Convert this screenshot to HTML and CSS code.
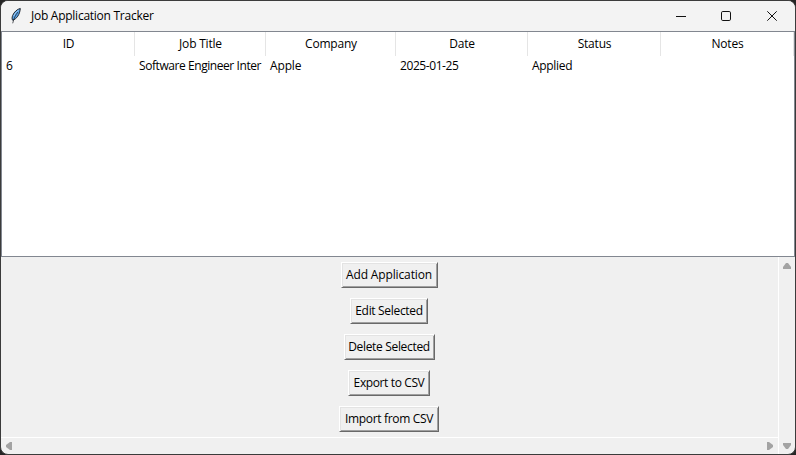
FILE: index.html
```html
<!DOCTYPE html>
<html lang="en">
<head>
<meta charset="utf-8">
<title>Job Application Tracker</title>
<link rel="stylesheet" href="styles.css">
</head>
<body>
<div class="window">
  <header class="titlebar">
    <svg class="feather" width="12" height="18" viewBox="0 0 12 18">
      <path d="M10.3 1.5C7.5 2 4 5 2.7 8.4C1.9 10.4 1.9 12 2.6 13.2C6.5 12.2 9.9 7.5 10.3 1.5Z" fill="#5ba3e6" stroke="#10151c" stroke-width=".9"/>
      <path d="M8 5C5.5 8 4 11 2.7 16.3" fill="none" stroke="#15191f" stroke-width=".7"/>
      <path d="M8.5 3.2C6.3 4.7 4.7 6.7 3.9 8.9" fill="none" stroke="#a9d2f5" stroke-width=".9"/>
    </svg>
    <h1 class="title">Job Application Tracker</h1>
    <svg class="controls" width="104" height="14" viewBox="0 0 104 14" fill="none" stroke="#111">
      <path d="M1 7.5H11"/>
      <rect x="46.5" y="2.5" width="9" height="9" rx="1.3"/>
      <path d="M92.3 2.3L101.7 11.7M101.7 2.3L92.3 11.7"/>
    </svg>
  </header>
  <main class="table">
    <div class="row head">
      <span>ID</span><span>Job Title</span><span>Company</span><span>Date</span><span>Status</span><span>Notes</span>
    </div>
    <div class="row">
      <span>6</span><span class="long">Software Engineer Inter</span><span>Apple</span><span class="date">2025-01-25</span><span>Applied</span><span></span>
    </div>
  </main>
  <section class="lower">
    <div class="actions">
      <button class="btn add">Add Application</button>
      <button class="btn edit">Edit Selected</button>
      <button class="btn delete">Delete Selected</button>
      <button class="btn export">Export to CSV</button>
      <button class="btn import">Import from CSV</button>
    </div>
    <div class="vbar">
      <svg width="8" height="6" viewBox="0 0 8 6"><path d="M3 0H5L8 4V6H0V4Z"/></svg>
      <svg width="8" height="6" viewBox="0 0 8 6"><path d="M0 0H8V2L5 6H3L0 2Z"/></svg>
    </div>
    <div class="hbar">
      <svg width="6" height="8" viewBox="0 0 6 8"><path d="M6 0V8H4L0 5V3L4 0Z"/></svg>
      <svg width="6" height="8" viewBox="0 0 6 8"><path d="M0 0V8H2L6 5V3L2 0Z"/></svg>
    </div>
  </section>
</div>
</body>
</html>
```
FILE: styles.css
```css
* { box-sizing: border-box; }
body {
  margin: 0;
  height: 455px;
  overflow: hidden;
  background: #252525;
  color: #000;
  font: 12px/16px "Open Sans", "Noto Sans", sans-serif;
  letter-spacing: -0.32px;
}
.window {
  display: flex;
  flex-direction: column;
  width: 796px;
  height: 455px;
  border: 1px solid #3b3b3b;
  border-radius: 8px;
  overflow: hidden;
  background: #f0f0f0;
}
.titlebar {
  display: flex;
  align-items: center;
  height: 30px;
  padding: 0 16px 0 9px;
  background: #f3f3f3;
}
.feather { margin-top: -1px; }
.title {
  flex: 1;
  margin: 0 0 0 9px;
  font-size: 12px;
  font-weight: 400;
  letter-spacing: -0.26px;
  white-space: nowrap;
}
.table {
  height: 226px;
  border: 1px solid #828790;
  background: #fff;
}
.row {
  display: grid;
  grid-template-columns: 133px 131px 130px 132px 133px 1fr;
  height: 20px;
  line-height: 20px;
  white-space: nowrap;
}
.row span { padding-left: 4px; }
.row .long { letter-spacing: -0.43px; }
.row .date { letter-spacing: -0.42px; }
.row:not(.head) span:nth-child(3) { letter-spacing: -0.15px; }
.head {
  height: 24px;
  line-height: 24px;
  text-align: center;
  letter-spacing: -0.2px;
}
.head span {
  padding: 0 0 0 1px;
  border-right: 1px solid #e5e5e5;
}
.lower {
  flex: 1;
  display: grid;
  grid-template-columns: 777px 1fr;
  grid-template-rows: 180px 1fr;
}
.actions {
  display: flex;
  flex-direction: column;
  align-items: center;
  gap: 10px;
  padding: 5px 1px 0 0;
}
.btn {
  width: 97px;
  height: 26px;
  padding: 0;
  border: 1px solid;
  border-color: #fff #696969 #696969 #fff;
  background: #f0f0f0;
  box-shadow: inset 1px 1px #e3e3e3, inset -1px -1px #a0a0a0;
  color: #000;
  font: inherit;
  letter-spacing: -0.32px;
  white-space: nowrap;
}
.add { letter-spacing: -0.14px; }
.edit { width: 78px; }
.delete { width: 91px; }
.export { width: 82px; letter-spacing: -0.38px; }
.import { width: 100px; }
.vbar, .hbar {
  display: flex;
  justify-content: space-between;
  align-items: center;
  fill: #a3a3a3;
}
.vbar {
  grid-column: 2;
  grid-row: 1 / 3;
  flex-direction: column;
  padding: 6px 0 5px;
  border-left: 1px solid #fff;
}
.hbar {
  padding: 0 5px;
  border-top: 1px solid #fff;
}
```
